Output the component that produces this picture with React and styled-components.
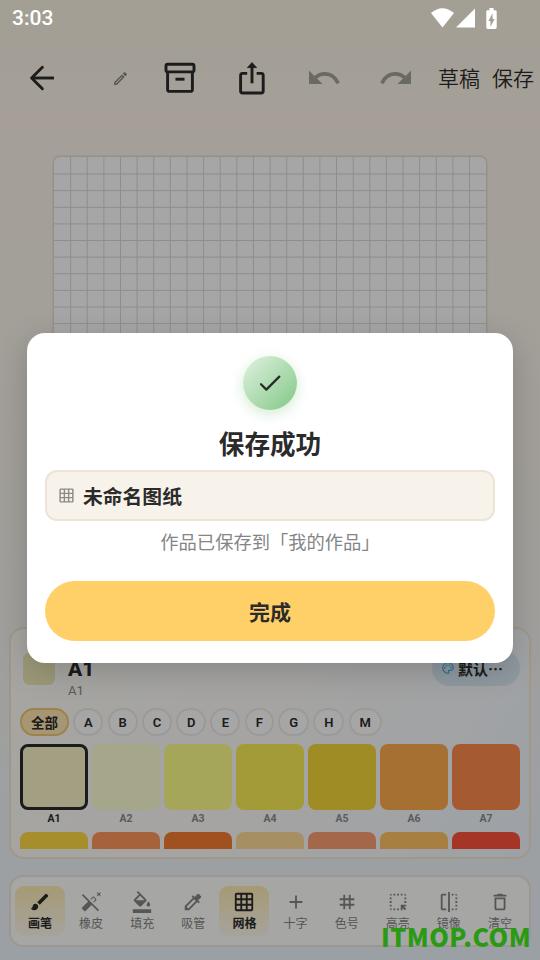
import styled, {createGlobalStyle} from "styled-components";
import {
    MdBrush, MdAutoFixOff, MdFormatColorFill, MdColorize, MdGridOn, MdAdd, MdTag,
    MdHighlightAlt, MdFlip, MdDeleteOutline, MdUndo, MdRedo, MdOutlineEdit, MdOutlinePalette,
    MdBatteryChargingFull
} from "react-icons/md";

const CELL = 16.62;
const gridLines = Array.from({length: 25}, (_, i) => Math.round((i + 1) * CELL * 10) / 10);

const groups = ["全部", "A", "B", "C", "D", "E", "F", "G", "H", "M"];
const groupWidths = [49, 30, 30, 30, 30, 30, 29, 31, 31, 33];

const colors = [
    {name: "A1", color: "#FAF4C8"},
    {name: "A2", color: "#FFFFD5"},
    {name: "A3", color: "#FEFF8B"},
    {name: "A4", color: "#FBED56"},
    {name: "A5", color: "#F4D738"},
    {name: "A6", color: "#FEAC4C"},
    {name: "A7", color: "#FE8B4C"},
];
// second row is only half scrolled into view
const nextColors = ["#FFDA45", "#FF995B", "#F77C31", "#FFDD99", "#FE9F72", "#FFC365", "#FD543D"];

const tools = [
    {name: "画笔", icon: MdBrush, active: true},
    {name: "橡皮", icon: MdAutoFixOff},
    {name: "填充", icon: MdFormatColorFill},
    {name: "吸管", icon: MdColorize},
    {name: "网格", icon: MdGridOn, active: true},
    {name: "十字", icon: MdAdd},
    {name: "色号", icon: MdTag},
    {name: "高亮", icon: MdHighlightAlt},
    {name: "镜像", icon: MdFlip},
    {name: "清空", icon: MdDeleteOutline},
];

const ArrowIcon = () => (
    <svg width="28" height="28" viewBox="0 0 28 28" fill="none" stroke="#2b2b2b" strokeWidth="2.9">
        <path d="M26 14H4" />
        <path d="M14.4 3.2L3.6 14l10.8 10.8" strokeLinecap="round" strokeLinejoin="round" />
    </svg>
);

const ArchiveIcon = () => (
    <svg width="32" height="32" viewBox="0 0 32 32" fill="none" stroke="#2b2b2b" strokeWidth="2.9" strokeLinejoin="round">
        <rect x="2" y="2.3" width="28" height="7.6" rx="1.6" />
        <path d="M3.6 10v17.400a2 2 0 0 0 2 2h20.800a2 2 0 0 0 2-2V10" />
        <path d="M11.500 17.2h9" />
    </svg>
);

const ShareIcon = () => (
    <svg width="28" height="34" viewBox="0 0 28 34" fill="none" stroke="#2b2b2b" strokeWidth="2.9">
        <path d="M9.2 12.4H4.600a2 2 0 0 0-2 2V30a2 2 0 0 0 2 2h18.600a2 2 0 0 0 2-2V14.400a2 2 0 0 0-2-2h-4.600" />
        <path d="M14 22.300V4" />
        <path d="M14 1.600l4.600 5H9.400z" fill="#2b2b2b" strokeWidth="0.8" strokeLinejoin="round" />
    </svg>
);

const App = () => {
    return (
        <>
            <GlobalStyle />
            <Screen>
                <Header>
                    <BackButton><ArrowIcon /></BackButton>
                    <RenameButton><MdOutlineEdit size={17} /></RenameButton>
                    <IconButton><ArchiveIcon /></IconButton>
                    <IconButton><ShareIcon /></IconButton>
                    <IconButton Color="#a4a299"><MdUndo size={36} /></IconButton>
                    <IconButton Color="#a4a299"><MdRedo size={36} /></IconButton>
                    <TextButtons>
                        <span>草稿</span>
                        <span>保存</span>
                    </TextButtons>
                </Header>
                <Paper>
                    <svg width="432" height="432">
                        {gridLines.map((p) => (
                            <g key={p} stroke="#dadada" strokeWidth="1">
                                <path d={`M${p} 0V432`} />
                                <path d={`M0 ${p + 0.4}H432`} />
                            </g>
                        ))}
                    </svg>
                </Paper>
                <Panel>
                    <Current>
                        <CurrentColor />
                        <CurrentText>
                            <CurrentName>A1</CurrentName>
                            <CurrentCode>A1</CurrentCode>
                        </CurrentText>
                        <PaletteButton><MdOutlinePalette size={14} color="#3fb0dc" />默认…</PaletteButton>
                    </Current>
                    <Groups>
                        {groups.map((group, i) => (
                            <Group key={group} Active={i === 0} Width={groupWidths[i]}>{group}</Group>
                        ))}
                    </Groups>
                    <Swatches>
                        {colors.map((item, i) => (
                            <Swatch key={item.name}>
                                <SwatchColor Color={item.color} Active={i === 0} />
                                <SwatchName Active={i === 0}>{item.name}</SwatchName>
                            </Swatch>
                        ))}
                        {nextColors.map((color) => (
                            <SwatchColor key={color} Color={color} />
                        ))}
                    </Swatches>
                </Panel>
                <ToolBar>
                    {tools.map(({name, icon: Icon, active}) => (
                        <Tool key={name} Active={active}>
                            <Icon size={22} />
                            <span>{name}</span>
                        </Tool>
                    ))}
                </ToolBar>
            </Screen>
            <Overlay>
                <Dialog>
                    <CheckCircle>
                        <svg width="28" height="28" viewBox="0 0 28 28" fill="none" stroke="#2b2b2b" strokeWidth="2.300" strokeLinecap="round" strokeLinejoin="round">
                            <path d="M5 15.300l5.300 5.300L23.300 7.600" />
                        </svg>
                    </CheckCircle>
                    <Title>保存成功</Title>
                    <FileName><MdGridOn size={17} color="#8a8a86" />未命名图纸</FileName>
                    <Message>作品已保存到「我的作品」</Message>
                    <DoneButton>完成</DoneButton>
                </Dialog>
            </Overlay>
            <StatusBar>
                <Time>3:03</Time>
                <svg width="48" height="22" viewBox="0 0 48 22" fill="#fff">
                    <path d="M0 6Q11.500-3.500 23 6L11.500 20.500z" />
                    <path d="M25 20.500L44 1.500v19z" />
                </svg>
                <MdBatteryChargingFull size={25} color="#fff" />
            </StatusBar>
            <Watermark>ITMOP.COM</Watermark>
        </>
    )
}

export default App;

const GlobalStyle = createGlobalStyle`
  * {
    box-sizing: border-box;
  }
  body {
    margin: 0;
    font-family: Roboto, "Noto Sans CJK SC", sans-serif;
    color: #2b2b2b;
  }
  svg {
    display: block;
    flex: none;
  }
`;
const Screen = styled.div`
  width: 540px;
  height: 960px;
  padding-top: 42px;
  display: flex;
  flex-direction: column;
  align-items: center;
  overflow: hidden;
  background: linear-gradient(180deg, #faf4e3 0%, #fdf5ea 12%, #f8f5ed 55%, #eff6fe 100%);
`;
const Header = styled.header`
  width: 540px;
  height: 72px;
  display: flex;
  align-items: center;
  flex: none;
`;
const BackButton = styled.div`
  width: 84px;
  display: flex;
  justify-content: center;
`;
const RenameButton = styled.div`
  width: 59.500px;
  padding-left: 28px;
  color: #858585;
`;
const IconButton = styled.div`
  width: 72px;
  display: flex;
  justify-content: center;
  color: ${props => props.Color || "#2b2b2b"};
`;
const TextButtons = styled.div`
  margin: 0 0 2px 6.500px;
  display: flex;
  gap: 12px;
  font-size: 21px;
  font-weight: 350;
  white-space: nowrap;
`;
const Paper = styled.div`
  width: 434px;
  height: 434px;
  margin-top: 42px;
  border: 1px solid #e4dfd2;
  border-radius: 7px;
  background: #ffffff;
  box-shadow: 0 0 2px #d8cfbb;
  overflow: hidden;
  flex: none;
`;
const Panel = styled.section`
  width: 522px;
  height: 232px;
  margin-top: 37px;
  padding: 23px 9px 8px;
  border: 2px solid #f5e9cf;
  border-radius: 15px;
  background: linear-gradient(120deg, #fffdf8 0%, #fdfcfa 50%, #f2f8ff 100%);
  flex: none;
`;
const Current = styled.div`
  height: 46px;
  display: flex;
  align-items: flex-start;
`;
const CurrentColor = styled.div`
  width: 38px;
  height: 38px;
  margin-top: -2px;
  border: 3px solid #ffffff;
  border-radius: 9px;
  background: #f0ebb9;
`;
const CurrentText = styled.div`
  margin: 5px 0 0 10px;
  flex: 1;
`;
const CurrentName = styled.div`
  font-size: 21px;
  line-height: 24px;
  font-weight: 800;
`;
const CurrentCode = styled.div`
  margin-top: 1px;
  font-size: 13px;
  line-height: 17px;
  color: #8c8c8c;
`;
const PaletteButton = styled.div`
  width: 88px;
  height: 36px;
  margin-top: -2px;
  padding-left: 9px;
  display: flex;
  align-items: center;
  gap: 3px;
  border-radius: 18px;
  background: #dcecf6;
  font-family: "Noto Sans CJK SC", sans-serif;
  font-size: 15px;
  font-weight: 600;
`;
const Groups = styled.div`
  margin-top: 10px;
  display: flex;
  gap: 4.300px;
`;
const Group = styled.div`
  width: ${props => props.Width}px;
  height: 28px;
  display: flex;
  align-items: center;
  justify-content: center;
  border: 2px solid ${props => props.Active ? "#f0c875" : "#f1ece6"};
  border-radius: 14px;
  background: ${props => props.Active ? "#ffe7b2" : "#ffffff"};
  font-size: ${props => props.Active ? "13.5px" : "13px"};
  font-weight: ${props => props.Active ? 700 : 600};
  white-space: nowrap;
`;
const Swatches = styled.div`
  height: 105px;
  margin-top: 8px;
  display: grid;
  grid-template-columns: repeat(7, 1fr);
  gap: 4px;
  overflow: hidden;
`;
const Swatch = styled.div`
  height: 84px;
`;
const SwatchColor = styled.div`
  height: 66px;
  border-radius: 8px;
  border: ${props => props.Active ? "3px solid #2b2b2b" : "none"};
  background: ${props => props.Color};
`;
const SwatchName = styled.div`
  margin-top: 2px;
  text-align: center;
  font-size: 10.500px;
  line-height: 14px;
  font-weight: 700;
  color: ${props => props.Active ? "#2b2b2b" : "#8c8c8c"};
`;
const ToolBar = styled.nav`
  width: 522px;
  height: 72px;
  margin-top: 16px;
  padding: 0 4px;
  display: flex;
  align-items: center;
  justify-content: space-between;
  border: 2px solid #f0e9de;
  border-radius: 14px;
  background: #fffffe;
  flex: none;
`;
const Tool = styled.div`
  width: 50px;
  height: 50px;
  padding-top: 5px;
  display: flex;
  flex-direction: column;
  align-items: center;
  border-radius: 9px;
  background: ${props => props.Active ? "linear-gradient(180deg, #ffedb4, #fffaf0)" : "none"};
  color: ${props => props.Active ? "#2b2b2b" : "#858585"};
  font-size: 12px;
  line-height: 23px;
  font-weight: ${props => props.Active ? 700 : 400};
`;
const Overlay = styled.div`
  position: absolute;
  top: 0;
  left: 0;
  width: 540px;
  height: 960px;
  padding-top: 36px;
  display: flex;
  justify-content: center;
  align-items: center;
  background: rgba(0, 0, 0, 0.35);
`;
const Dialog = styled.div`
  width: 486px;
  height: 330px;
  padding: 23px 18px 0;
  display: flex;
  flex-direction: column;
  align-items: center;
  border-radius: 18px;
  background: #ffffff;
  box-shadow: 0 8px 32px rgba(0, 0, 0, 0.18);
`;
const CheckCircle = styled.div`
  width: 54px;
  height: 54px;
  display: flex;
  align-items: center;
  justify-content: center;
  border-radius: 50%;
  background: linear-gradient(135deg, #e0f2e1 0%, #82c785 100%);
  box-shadow: 0 4px 14px rgba(129, 199, 132, 0.35);
`;
const Title = styled.h3`
  margin: 16px 0 0;
  font-size: 25.600px;
  line-height: 38px;
  font-weight: 700;
`;
const FileName = styled.div`
  width: 450px;
  height: 51px;
  margin-top: 6px;
  padding-left: 11px;
  display: flex;
  align-items: center;
  gap: 8px;
  border: 2px solid #ece4d7;
  border-radius: 12px;
  background: #f8f3ea;
  font-size: 19.800px;
  font-weight: 700;
`;
const Message = styled.p`
  margin: 8px 0 0;
  font-size: 18.300px;
  line-height: 27px;
  color: #858585;
`;
const DoneButton = styled.button`
  width: 450px;
  height: 60px;
  margin-top: 25px;
  border: none;
  border-radius: 30px;
  background: #ffd067;
  font-family: inherit;
  font-size: 21px;
  font-weight: 700;
  color: #2b2b2b;
`;
const StatusBar = styled.div`
  position: absolute;
  top: 0;
  left: 0;
  width: 540px;
  height: 36px;
  padding: 0 36px 0 12px;
  display: flex;
  align-items: center;
  color: #ffffff;
`;
const Time = styled.div`
  flex: 1;
  font-size: 21px;
  font-weight: 500;
`;
const Watermark = styled.div`
  position: absolute;
  left: 381px;
  top: 919px;
  font-family: "Noto Sans CJK SC", sans-serif;
  font-size: 25px;
  line-height: 34px;
  font-weight: 800;
  letter-spacing: 0.500px;
  color: #2a9a14;
`;
